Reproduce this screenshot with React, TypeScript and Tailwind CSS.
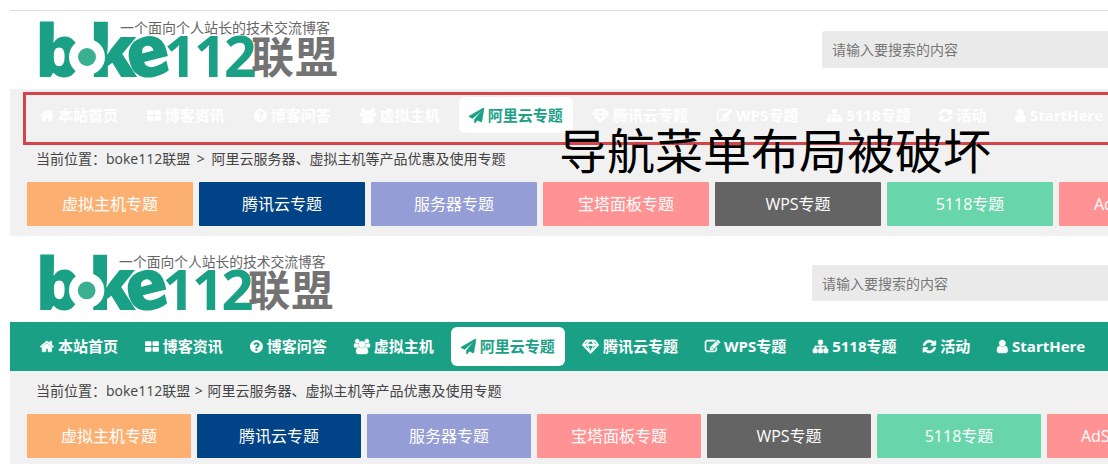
import clsx from 'clsx'

type IconShape = { viewBox: string; path: string; stroke?: number }

const icons: Record<string, IconShape> = {
  home: {
    viewBox: '64 0 1664 1792',
    path: 'M1472 992v480q0 26-19 45t-45 19h-384v-384h-256v384h-384q-26 0-45-19t-19-45v-480q0-1 .5-3t.5-3l575-474 575 474q1 2 1 6zm223-69l-62 74q-8 9-21 11h-3q-13 0-21-7l-692-577-692 577q-12 8-24 7-13-2-21-11l-62-74q-8-10-7-23.5t11-21.5l719-599q32-26 76-26t76 26l244 204v-195q0-14 9-23t23-9h192q14 0 23 9t9 23v408l219 182q10 8 11 21.5t-7 23.5z',
    stroke: 50,
  },
  grid: {
    viewBox: '64 0 1664 1792',
    path: 'M192 256h512q128 0 128 128v320q0 128-128 128H192q-128 0-128-128V384q0-128 128-128zM1088 256h512q128 0 128 128v320q0 128-128 128h-512q-128 0-128-128V384q0-128 128-128zM192 960h512q128 0 128 128v320q0 128-128 128H192q-128 0-128-128v-320q0-128 128-128zM1088 960h512q128 0 128 128v320q0 128-128 128h-512q-128 0-128-128v-320q0-128 128-128z',
  },
  question: {
    viewBox: '128 0 1536 1792',
    path: 'M1024 1376v-192q0-14-9-23t-23-9h-192q-14 0-23 9t-9 23v192q0 14 9 23t23 9h192q14 0 23-9t9-23zm256-672q0-88-55.5-163t-138.5-116-170-41q-243 0-371 213-15 24 8 42l132 100q7 6 19 6 16 0 25-12 53-68 86-92 34-24 86-24 48 0 85.5 26t37.5 59q0 38-20 61t-68 45q-63 28-115.5 86.5t-52.5 125.5v36q0 14 9 23t23 9h192q14 0 23-9t9-23q0-19 21.5-49.5t54.5-49.5q32-18 49-28.5t46-35 44.5-48 28-60.5 12.5-81zm384 192q0 209-103 385.5t-279.5 279.5-385.5 103-385.5-103-279.5-279.5-103-385.5 103-385.5 279.5-279.5 385.5-103 385.5 103 279.5 279.5 103 385.5z',
  },
  group: {
    viewBox: '-64 0 1920 1792',
    path: 'M529 896q-162 5-265 128h-134q-82 0-138-40.5t-56-118.5q0-353 124-353 6 0 43.5 21t97.5 42.5 119 21.5q67 0 133-23-5 37-5 66 0 139 81 256zm1071 637q0 120-73 189.5t-194 69.5h-874q-121 0-194-69.5t-73-189.5q0-53 3.5-103.5t14-109 26.5-108.5 43-97.5 62-81 85.5-53.5 111.5-20q10 0 43 21.5t73 48 107 48 135 21.5 135-21.5 107-48 73-48 43-21.5q61 0 111.5 20t85.5 53.5 62 81 43 97.5 26.5 108.5 14 109 3.5 103.5zm-1024-1277q0 106-75 181t-181 75-181-75-75-181 75-181 181-75 181 75 75 181zm704 384q0 159-112.5 271.5t-271.5 112.5-271.5-112.5-112.5-271.5 112.5-271.5 271.5-112.5 271.5 112.5 112.5 271.5zm576 225q0 78-56 118.5t-138 40.5h-134q-103-123-265-128 81-117 81-256 0-29-5-66 66 23 133 23 59 0 119-21.5t97.5-42.5 43.5-21q124 0 124 353zm-128-609q0 106-75 181t-181 75-181-75-75-181 75-181 181-75 181 75 75 181z',
    stroke: 50,
  },
  plane: {
    viewBox: '0 0 1792 1792',
    path: 'M1764 11q33 24 27 64l-256 1536q-5 29-32 45-14 8-31 8-11 0-24-5l-453-185-242 295q-18 23-49 23-13 0-22-4-19-7-30.5-23.5t-11.5-36.5v-349l864-1059-1069 925-395-162q-37-14-40-55-2-40 32-59l1664-960q15-9 32-9 20 0 36 11z',
    stroke: 50,
  },
  diamond: {
    viewBox: '-128 0 2048 1792',
    path: 'M384 128h1024q30 0 51 26l384 512q17 20 15 45t-18 42l-896 960q-20 21-48 21t-48-21l-896-960q-17-17-18-42t15-45l384-512q19-26 51-26zM212 768l623 665-300-665zM896 1540l349-772h-698zM358 640l204-384h-146l-288 384zM957 1433l623-665h-323zM549 640h694l-204-384h-286zM1434 640h230l-288-384h-146z',
    stroke: 90,
  },
  edit: {
    viewBox: '0 0 1792 1792',
    path: 'M888 1184l116-116-152-152-116 116v56h96v96h56zm440-720q-16-16-33 1l-350 350q-17 17-1 33t33-1l350-350q17-17 1-33zm80 594v190q0 119-84.5 203.5t-203.5 84.5h-832q-119 0-203.5-84.5t-84.5-203.5v-832q0-119 84.5-203.5t203.5-84.5h832q63 0 117 25 15 7 18 23 3 17-9 29l-49 49q-14 14-32 8-23-6-45-6h-832q-66 0-113 47t-47 113v832q0 66 47 113t113 47h832q66 0 113-47t47-113v-126q0-13 9-22l64-64q15-15 35-7t20 29zm-96-738l288 288-672 672h-288v-288zm444 132l-92 92-288-288 92-92q28-28 68-28t68 28l152 152q28 28 28 68t-28 68z',
    stroke: 70,
  },
  sitemap: {
    viewBox: '0 0 1792 1792',
    path: 'M1792 1248v320q0 40-28 68t-68 28h-320q-40 0-68-28t-28-68v-320q0-40 28-68t68-28h96v-192h-512v192h96q40 0 68 28t28 68v320q0 40-28 68t-68 28h-320q-40 0-68-28t-28-68v-320q0-40 28-68t68-28h96v-192h-512v192h96q40 0 68 28t28 68v320q0 40-28 68t-68 28h-320q-40 0-68-28t-28-68v-320q0-40 28-68t68-28h96v-192q0-52 38-90t90-38h512v-192h-96q-40 0-68-28t-28-68v-320q0-40 28-68t68-28h320q40 0 68 28t28 68v320q0 40-28 68t-68 28h-96v192h512q52 0 90 38t38 90v192h96q40 0 68 28t28 68z',
    stroke: 70,
  },
  refresh: {
    viewBox: '128 0 1536 1792',
    path: 'M1639 1056q0 5-1 7-64 268-268 434.5t-478 166.5q-146 0-282.5-55t-243.5-157l-129 129q-19 19-45 19t-45-19-19-45v-448q0-26 19-45t45-19h448q26 0 45 19t19 45-19 45l-137 137q71 66 161 102t187 36q134 0 250-65t186-179q11-17 53-117 8-23 30-23h192q13 0 22.5 9.5t9.5 22.5zm25-800v448q0 26-19 45t-45 19h-448q-26 0-45-19t-19-45 19-45l138-138q-148-137-349-137-134 0-250 65t-186 179q-11 17-53 117-8 23-30 23h-199q-13 0-22.5-9.5t-9.5-22.5v-7q65-268 270-434.5t480-166.5q146 0 284 55.5t245 156.5l130-129q19-19 45-19t45 19 19 45z',
    stroke: 70,
  },
  user: {
    viewBox: '256 0 1280 1792',
    path: 'M1536 1399q0 109-62.5 187t-150.5 78h-854q-88 0-150.5-78t-62.5-187q0-85 8.5-160.5t31.5-152 58.5-131 94-89 134.5-34.5q131 128 313 128t313-128q76 0 134.5 34.5t94 89 58.5 131 31.5 152 8.5 160.5zm-256-887q0 159-112.5 271.5t-271.5 112.5-271.5-112.5-112.5-271.5 112.5-271.5 271.5-112.5 271.5 112.5 112.5 271.5z',
    stroke: 50,
  },
}

const navItems = [
  { icon: 'home', label: '本站首页' },
  { icon: 'grid', label: '博客资讯' },
  { icon: 'question', label: '博客问答' },
  { icon: 'group', label: '虚拟主机' },
  { icon: 'plane', label: '阿里云专题', active: true },
  { icon: 'diamond', label: '腾讯云专题' },
  { icon: 'edit', label: 'WPS专题' },
  { icon: 'sitemap', label: '5118专题' },
  { icon: 'refresh', label: '活动' },
  { icon: 'user', label: 'StartHere' },
]

const topics = [
  { label: '虚拟主机专题', color: 'bg-[#fbb072]' },
  { label: '腾讯云专题', color: 'bg-[#004386]' },
  { label: '服务器专题', color: 'bg-[#949dd5]' },
  { label: '宝塔面板专题', color: 'bg-[#ff9292]' },
  { label: 'WPS专题', color: 'bg-[#646464]' },
  { label: '5118专题', color: 'bg-[#68d5aa]' },
  { label: 'AdSense专题', color: 'bg-[#ff9292]' },
]

const Icon = ({ name }: { name: string }) => {
  const { viewBox, path, stroke = 0 } = icons[name]
  return (
    <svg
      viewBox={viewBox}
      className="h-[15px] w-auto shrink-0 overflow-visible"
      fill="currentColor"
      stroke={stroke ? 'currentColor' : 'none'}
      strokeWidth={stroke}
      aria-hidden="true"
    >
      <path fillRule={name === 'diamond' ? 'evenodd' : 'nonzero'} d={path} />
    </svg>
  )
}

const Logo = ({ className }: { className: string }) => (
  <a href="#" aria-label="boke112联盟" className="shrink-0">
    <svg viewBox="0 0 304 62" className={clsx('block overflow-visible', className)}>
      <g fill="#1aa185" fontFamily="'Open Sans', 'Noto Sans', sans-serif" fontWeight="800">
        <text x="-3" y="58" fontSize="73">b</text>
        <text x="51" y="58" fontSize="73">k</text>
        <text x="88" y="58" fontSize="72" transform="rotate(-14 110 38)">e</text>
        <text x="126 156 186" y="58" fontSize="57" fontWeight="700">112</text>
      </g>
      <circle cx="49" cy="38" r="18" fill="#fff" />
      <circle cx="49" cy="38" r="9" fill="#3bb091" />
      <g fontFamily="'Noto Sans CJK SC', sans-serif">
        <text x="213 257" y="54" fontSize="43" fontWeight="700" fill="#737373">联盟</text>
        <text x="82" y="14" fontSize="14" fill="#666">一个面向个人站长的技术交流博客</text>
      </g>
    </svg>
  </a>
)

const NavLinks = ({ compact }: { compact?: boolean }) => (
  <ul className={clsx('flex text-[15px] font-bold text-white', compact ? 'gap-[7px]' : 'gap-[9px]')}>
    {navItems.map((item) => (
      <li key={item.label} className="shrink-0">
        <a
          href="#"
          className={clsx(
            'flex items-center gap-1 rounded-md px-2.5 whitespace-nowrap',
            compact ? 'h-[39px]' : 'h-9',
            item.active && 'bg-white text-[#1aa185]',
          )}
        >
          <Icon name={item.icon} />
          {item.label}
        </a>
      </li>
    ))}
  </ul>
)

const Breadcrumb = ({ className, arrowClass }: { className: string; arrowClass: string }) => (
  <p className={clsx('pl-[26px] text-sm whitespace-nowrap text-[#444]', className)}>
    当前位置：<a href="#">boke112联盟</a> <span className={arrowClass}>&gt;</span> 阿里云服务器、虚拟主机等产品优惠及使用专题
  </p>
)

const Topics = ({ itemClass }: { itemClass: string }) => (
  <div className="flex gap-1.5 overflow-hidden pl-[17px]">
    {topics.map((topic) => (
      <a
        key={topic.label}
        href="#"
        className={clsx('shrink-0 rounded-[1px] py-2.5 text-center text-base leading-6 text-white', topic.color, itemClass)}
      >
        {topic.label}
      </a>
    ))}
  </div>
)

const Search = ({ className }: { className: string }) => (
  <input
    type="search"
    aria-label="搜索"
    placeholder="请输入要搜索的内容"
    className={clsx('ml-auto rounded-l-xs bg-[#eaeaea] px-2.5 text-sm placeholder:text-[#777]', className)}
  />
)

const App = () => {
  return (
    <div className="overflow-hidden bg-white pt-2.5 pl-2.5 font-['Open_Sans','Noto_Sans_CJK_SC',sans-serif]">
      {/* broken menu: the bar background is missing */}
      <section className="relative">
        <header className="flex items-start border-t border-[#dcdcdc] pt-2 pb-2 pl-7">
          <Logo className="h-[62px] w-[304px]" />
          <Search className="mt-3 h-[37px] w-[286px]" />
        </header>
        <div className="bg-[#f1f1f1] pt-[3px] pb-2.5">
          <nav className="ml-[13px] overflow-hidden border-3 border-r-0 border-[#d4444a] pt-0.5 pb-[9px] pl-1">
            <NavLinks />
          </nav>
          <Breadcrumb className="pb-[9px] leading-7" arrowClass="mx-[3px]" />
          <Topics itemClass="w-[166px]" />
        </div>
        <p className="absolute top-[114px] left-[549px] font-['Noto_Sans_CJK_SC',sans-serif] text-5xl leading-none whitespace-nowrap text-black">
          导航菜单布局被破坏
        </p>
      </section>

      <section>
        <header className="flex items-start pt-[17px] pb-2 pl-7">
          <Logo className="h-[61px] w-[300px]" />
          <Search className="mt-3 h-9 w-[296px]" />
        </header>
        <nav className="overflow-hidden bg-[#1aa185] py-[5px] pl-5">
          <NavLinks compact />
        </nav>
        <div className="bg-[#f1f1f1] pb-1.5">
          <Breadcrumb className="pb-[3px] leading-10" arrowClass="mx-px" />
          <Topics itemClass="w-[164px]" />
        </div>
      </section>
    </div>
  )
}

export default App
